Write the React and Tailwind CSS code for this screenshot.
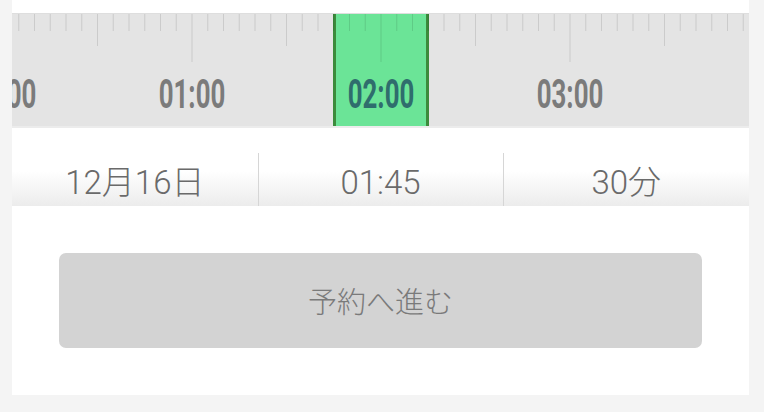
import React from 'react';

const TICK = 15.75;
const START = -9; // x of 00:00 inside the card

const hours = ['00:00', '01:00', '02:00', '03:00'];

function Ruler() {
  const ticks = [];
  for (let k = 0; k <= 48; k++) {
    const x = START + k * TICK;
    const h = k % 12 === 0 ? 48 : k % 6 === 0 ? 32 : 17;
    ticks.push(<line key={k} x1={x} x2={x} y1={0} y2={h} stroke="#000" strokeOpacity="0.11" strokeWidth="1" />);
  }
  return (
    <div className="relative h-[115px] overflow-hidden border-t border-b-2 border-t-[#dedede] border-b-[#ececec] bg-[#e4e4e4]">
      {/* selected range 01:45 - 02:15 */}
      <div className="absolute top-0 bottom-0 left-[321px] w-[96px] border-x-[3px] border-[#3c8b3c] bg-[#6be497]" />
      <svg className="absolute inset-0" width="737" height="113">
        {ticks}
      </svg>
      {hours.map((t, i) => (
        <div
          key={t}
          className={`absolute top-[60px] -translate-x-1/2 scale-x-[0.63] text-[41px] leading-none font-bold ${
            t === '02:00' ? 'text-[#2f6d6d]' : 'text-[#7b7b7b]'
          }`}
          style={{ left: START + i * 12 * TICK, fontFamily: 'Roboto, "Liberation Sans", sans-serif' }}
        >
          {t}
        </div>
      ))}
    </div>
  );
}

function Info() {
  const cells = ['12月16日', '01:45', '30分'];
  return (
    <div className="flex h-[78px] bg-gradient-to-b from-white from-55% to-[#ececec]">
      {cells.map((c, i) => (
        <div key={c} className="relative flex-1 flex items-center justify-center pt-[31px]">
          {i > 0 && <div className="absolute left-0 top-[25px] bottom-0 w-px bg-[#d6d6d6]" />}
          <span
            className="text-[33px] leading-none font-light text-[#6a6a6a]"
            style={{ fontFamily: 'Roboto, "Noto Sans CJK JP", sans-serif' }}
          >
            {c}
          </span>
        </div>
      ))}
    </div>
  );
}

export default function App() {
  return (
    <div className="h-[412px] w-[764px] overflow-hidden bg-[#f4f4f4]">
      <div className="ml-[12px] w-[737px] h-[395px] bg-white pt-[13px]">
        <Ruler />
        <Info />
        <div className="p-[47px]">
          <button
            className="w-full h-[95px] rounded-[7px] bg-[#d3d3d3] text-[29px] text-[#7a7a7a] font-light"
            style={{ fontFamily: '"Noto Sans CJK JP", sans-serif' }}
          >
            予約へ進む
          </button>
        </div>
      </div>
    </div>
  );
}
